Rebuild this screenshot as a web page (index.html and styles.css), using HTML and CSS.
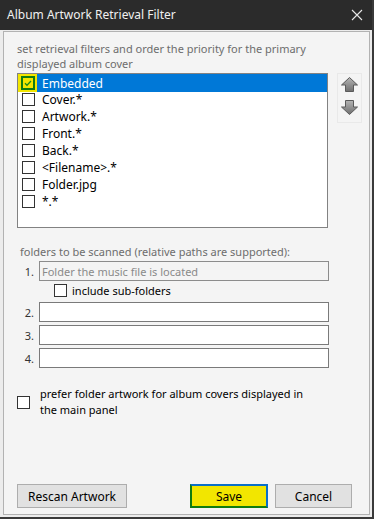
FILE: index.html
```html
<!DOCTYPE html>
<html>
<head>
    <link rel="stylesheet" href="styles.css">
</head>
<body>
    <div class="window">
        <div class="titlebar">
            <span class="title">Album Artwork Retrieval Filter</span>
            <svg class="close" width="12" height="12" viewBox="0 0 12 12">
                <path d="M1 1 L11 11 M11 1 L1 11" stroke="#e8e8e8" stroke-width="1.1" fill="none"/>
            </svg>
        </div>

        <div class="client">
            <div class="panel">
                <p class="intro">set retrieval filters and order the priority for the primary displayed album cover</p>

                <div class="filter-row">
                    <ul class="filter-list">
                        <li class="selected"><span class="focus"><span class="check checked"><svg width="10" height="10" viewBox="0 0 10 10"><path d="M2 5.2 L4 7.2 L8 3" stroke="#1a8a1a" stroke-width="1.3" fill="none"/></svg></span></span><span>Embedded</span></li>
                        <li><span class="check"></span><span>Cover.*</span></li>
                        <li><span class="check"></span><span>Artwork.*</span></li>
                        <li><span class="check"></span><span>Front.*</span></li>
                        <li><span class="check"></span><span>Back.*</span></li>
                        <li><span class="check"></span><span>&lt;Filename&gt;.*</span></li>
                        <li><span class="check"></span><span>Folder.jpg</span></li>
                        <li><span class="check"></span><span>*.*</span></li>
                    </ul>

                    <div class="order-buttons">
                        <button class="arrow" title="move up">
                            <svg width="17" height="16" viewBox="0 0 17 16">
                                <defs>
                                    <linearGradient id="ag" x1="0" y1="0" x2="0" y2="1">
                                        <stop offset="0" stop-color="#b4b4b4"/>
                                        <stop offset="1" stop-color="#6e6e6e"/>
                                    </linearGradient>
                                </defs>
                                <path d="M8.5 0.5 L16.5 8 L12.5 8 L12.5 14.5 L4.5 14.5 L4.5 8 L0.5 8 Z" fill="url(#ag)" stroke="#5a5a5a" stroke-width="1"/>
                            </svg>
                        </button>
                        <button class="arrow" title="move down">
                            <svg width="17" height="16" viewBox="0 0 17 16">
                                <path d="M4.5 0.5 L12.5 0.5 L12.5 7 L16.5 7 L8.5 14.5 L0.5 7 L4.5 7 Z" fill="url(#ag)" stroke="#5a5a5a" stroke-width="1"/>
                            </svg>
                        </button>
                    </div>
                </div>

                <p class="label">folders to be scanned (relative paths are supported):</p>

                <div class="folder-row">
                    <span class="num">1.</span>
                    <input type="text" disabled placeholder="Folder the music file is located">
                </div>
                <div class="sub-folders"><span class="check"></span><span>include sub-folders</span></div>
                <div class="folder-row">
                    <span class="num">2.</span>
                    <input type="text">
                </div>
                <div class="folder-row">
                    <span class="num">3.</span>
                    <input type="text">
                </div>
                <div class="folder-row">
                    <span class="num">4.</span>
                    <input type="text">
                </div>

                <div class="prefer">
                    <span class="check"></span>
                    <span class="prefer-text">prefer folder artwork for album covers displayed in the main panel</span>
                </div>

                <div class="buttons">
                    <button class="btn rescan">Rescan Artwork</button>
                    <span class="spacer"></span>
                    <button class="btn save">Save</button>
                    <button class="btn cancel">Cancel</button>
                </div>
            </div>
        </div>
    </div>
</body>
</html>
```

FILE: styles.css
```css
html, body {
    margin: 0;
    padding: 0;
    background-color: #3a3a3a;
}
body {
    font-family: 'Noto Sans', 'Liberation Sans', sans-serif;
    font-size: 11px;
    color: #000;
}
.window {
    width: 372px;
    height: 517px;
    display: flex;
    flex-direction: column;
    background-color: #ececec;
}
.titlebar {
    height: 30px;
    flex-shrink: 0;
    background-color: #2b2b2b;
    display: flex;
    align-items: center;
    justify-content: space-between;
    padding: 0 9px 0 7px;
}
.title {
    color: #f0f0f0;
    font-size: 12px;
    margin-top: -1px;
}
.close {
    margin-top: -1px;
}
.client {
    flex-grow: 1;
    display: flex;
    padding: 1px 2px 2px 3px;
}
.panel {
    flex-grow: 1;
    display: flex;
    flex-direction: column;
    border: 1px solid #b2b2b2;
    background-color: #f4f4f4;
    padding: 9px 0 0 13px;
}
.intro {
    margin: 0;
    width: 300px;
    line-height: 15px;
    color: #6d6d6d;
}

/* Filter list */
.filter-row {
    display: flex;
    margin-top: 2px;
}
.filter-list {
    list-style: none;
    margin: 0;
    padding: 0;
    width: 309px;
    height: 153px;
    border: 1px solid #828282;
    background-color: #fff;
}
.filter-list li {
    height: 17px;
    display: flex;
    align-items: center;
    padding-left: 4px;
    white-space: nowrap;
    font-size: 12px;
}
.filter-list li .check {
    margin-right: 7px;
}
.filter-list li.selected {
    background-color: #0078d7;
    color: #fff;
    padding-left: 0;
    height: 18px;
    margin-bottom: -1px;
}
.focus {
    width: 19px;
    height: 18px;
    background-color: #f2e600;
    display: flex;
    align-items: center;
    justify-content: center;
    margin-right: 5px;
}
.filter-list li .focus .check {
    margin: 0;
}
.check {
    width: 11px;
    height: 11px;
    flex-shrink: 0;
    border: 1px solid #333;
    background-color: #fff;
    display: inline-flex;
    align-items: center;
    justify-content: center;
}
.check.checked {
    width: 10px;
    height: 10px;
    border: 2px solid #107c10;
    background-color: #f2e600;
}
.order-buttons {
    margin-left: 9px;
    width: 23px;
    height: 45px;
    border: 1px solid #e9e9e9;
    display: flex;
    flex-direction: column;
    align-items: center;
    padding-top: 3px;
    gap: 7px;
}
.arrow {
    border: none;
    background: none;
    padding: 0;
    width: 17px;
    height: 16px;
    display: block;
}

/* Folders */
.label {
    margin: 16px 0 2px 3px;
    line-height: 15px;
    color: #6d6d6d;
}
.folder-row {
    display: flex;
    align-items: center;
    margin-bottom: 3px;
}
.num {
    width: 17px;
    text-align: right;
    margin-right: 5px;
    color: #333;
}
.folder-row input {
    width: 286px;
    height: 18px;
    box-sizing: content-box;
    padding: 0 0 0 2px;
    margin: 0;
    border: 1px solid #7a7a7a;
    border-radius: 0;
    background-color: #fff;
    font-family: inherit;
    font-size: 11px;
    outline: none;
}
.folder-row input:disabled {
    background-color: #f4f4f4;
    border-color: #8c8c8c;
}
.folder-row input::placeholder {
    color: #8a8a8a;
}
.sub-folders {
    display: flex;
    align-items: center;
    margin: -1px 0 5px 37px;
    height: 14px;
}
.sub-folders .check {
    margin-right: 5px;
}

/* Prefer option */
.prefer {
    display: flex;
    align-items: center;
    margin-top: 15px;
}
.prefer .check {
    margin-right: 10px;
    margin-top: 1px;
}
.prefer-text {
    width: 275px;
    line-height: 16px;
}

/* Buttons */
.buttons {
    margin-top: auto;
    margin-bottom: 6px;
    display: flex;
    align-items: center;
    padding-right: 17px;
    gap: 7px;
}
.spacer {
    flex-grow: 1;
}
.btn {
    height: 24px;
    border: 1px solid #adadad;
    background-color: #e1e1e1;
    font-family: inherit;
    font-size: 12px;
    color: #000;
    padding: 0;
    margin: 0;
}
.rescan {
    width: 110px;
}
.save {
    width: 78px;
    background-color: #f2e600;
    border: 2px solid #107c10;
    border-top-color: #0a6fc8;
    border-right-color: #0a6fc8;
}
.cancel {
    width: 77px;
}
```
